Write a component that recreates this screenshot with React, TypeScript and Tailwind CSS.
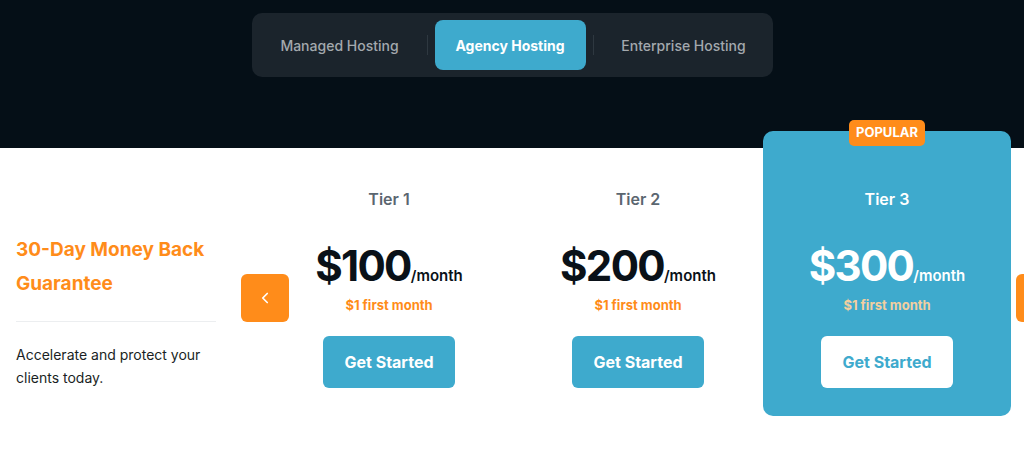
import { ChevronLeft, ChevronRight } from 'lucide-react'

const tabs = [
  { label: 'Managed Hosting', w: 'w-[160px]' },
  { label: 'Agency Hosting', w: 'w-[151px]' },
  { label: 'Enterprise Hosting', w: 'w-[166px]' },
]

const tiers = [
  { name: 'Tier 1', price: '$100', popular: false },
  { name: 'Tier 2', price: '$200', popular: false },
  { name: 'Tier 3', price: '$300', popular: true },
]

export default function App() {
  return (
    <div className="w-[1024px] h-[466px] overflow-hidden bg-white font-['Inter',sans-serif]">
      {/* Top bar with tabs */}
      <div className="h-[148px] bg-[#050f17] pt-[13px] flex justify-center">
        <div className="h-[64px] w-[521px] rounded-[10px] bg-[#1b242c] flex items-center pl-[8px] pr-[6px]">
          {tabs.map((t, i) => (
            <div key={t.label} className="flex items-center">
              {i > 0 && <div className="w-px h-[20px] bg-[#2e3840] mx-[7px]" />}
              <div
                className={
                  t.w +
                  (i === 1
                    ? ' h-[50px] rounded-[8px] bg-[#3eaacd] text-white font-bold text-[14px] flex items-center justify-center'
                    : ' h-[50px] text-[#a3a9ae] font-medium text-[14px] flex items-center justify-center')
                }
              >
                {t.label}
              </div>
            </div>
          ))}
        </div>
      </div>

      {/* Pricing row */}
      <div className="flex -mt-[17px] pl-4">
        <div className="w-[200px] pt-[102px]">
          <h2 className="text-[19px] leading-[34px] font-bold text-[#ff8c1a]">30-Day Money Back Guarantee</h2>
          <div className="h-px bg-[#eceef0] mt-[20px] mb-[21px]" />
          <p className="text-[14px] leading-[23px] text-[#1a1f24]">Accelerate and protect your clients today.</p>
        </div>

        <div className="relative ml-[49px] flex gap-px">
          <button className="absolute left-[-24px] top-[143px] w-[48px] h-[48px] rounded-[6px] bg-[#ff8c1a] flex items-center justify-center text-white z-10">
            <ChevronLeft size={18} strokeWidth={2.25} />
          </button>

          {tiers.map((t) => (
            <div
              key={t.name}
              className={
                'relative w-[248px] h-[285px] rounded-[10px] flex flex-col items-center pt-[56px] ' +
                (t.popular ? 'bg-[#3eaacd]' : '')
              }
            >
              {t.popular && (
                <div className="absolute top-[-11px] left-1/2 -translate-x-1/2 h-[26px] px-[7px] rounded-[5px] bg-[#ff8c1a] text-white text-[13px] font-bold flex items-center">
                  POPULAR
                </div>
              )}
              <div className={'text-[16px] leading-[24px] font-semibold ' + (t.popular ? 'text-white' : 'text-[#5b6670]')}>
                {t.name}
              </div>
              <div className={'mt-[34px] h-[42px] flex items-baseline ' + (t.popular ? 'text-white' : 'text-[#0a1118]')}>
                <span className="text-[42px] leading-[42px] font-bold tracking-[-0.04em]">{t.price}</span>
                <span className="text-[15px] leading-[15px] font-semibold">/month</span>
              </div>
              <div className={'mt-[10px] text-[13px] leading-[16px] font-bold ' + (t.popular ? 'text-[#f3cfa0]' : 'text-[#ff8c1a]')}>
                $1 first month
              </div>
              <button
                className={
                  'mt-[23px] w-[132px] h-[52px] rounded-[6px] text-[16px] font-bold ' +
                  (t.popular ? 'bg-white text-[#3eaacd]' : 'bg-[#3eaacd] text-white')
                }
              >
                Get Started
              </button>
            </div>
          ))}

          <button className="absolute left-[751px] top-[143px] w-[48px] h-[48px] rounded-[6px] bg-[#ff8c1a] flex items-center justify-center text-white z-10">
            <ChevronRight size={18} strokeWidth={2.25} />
          </button>
        </div>
      </div>
    </div>
  )
}
